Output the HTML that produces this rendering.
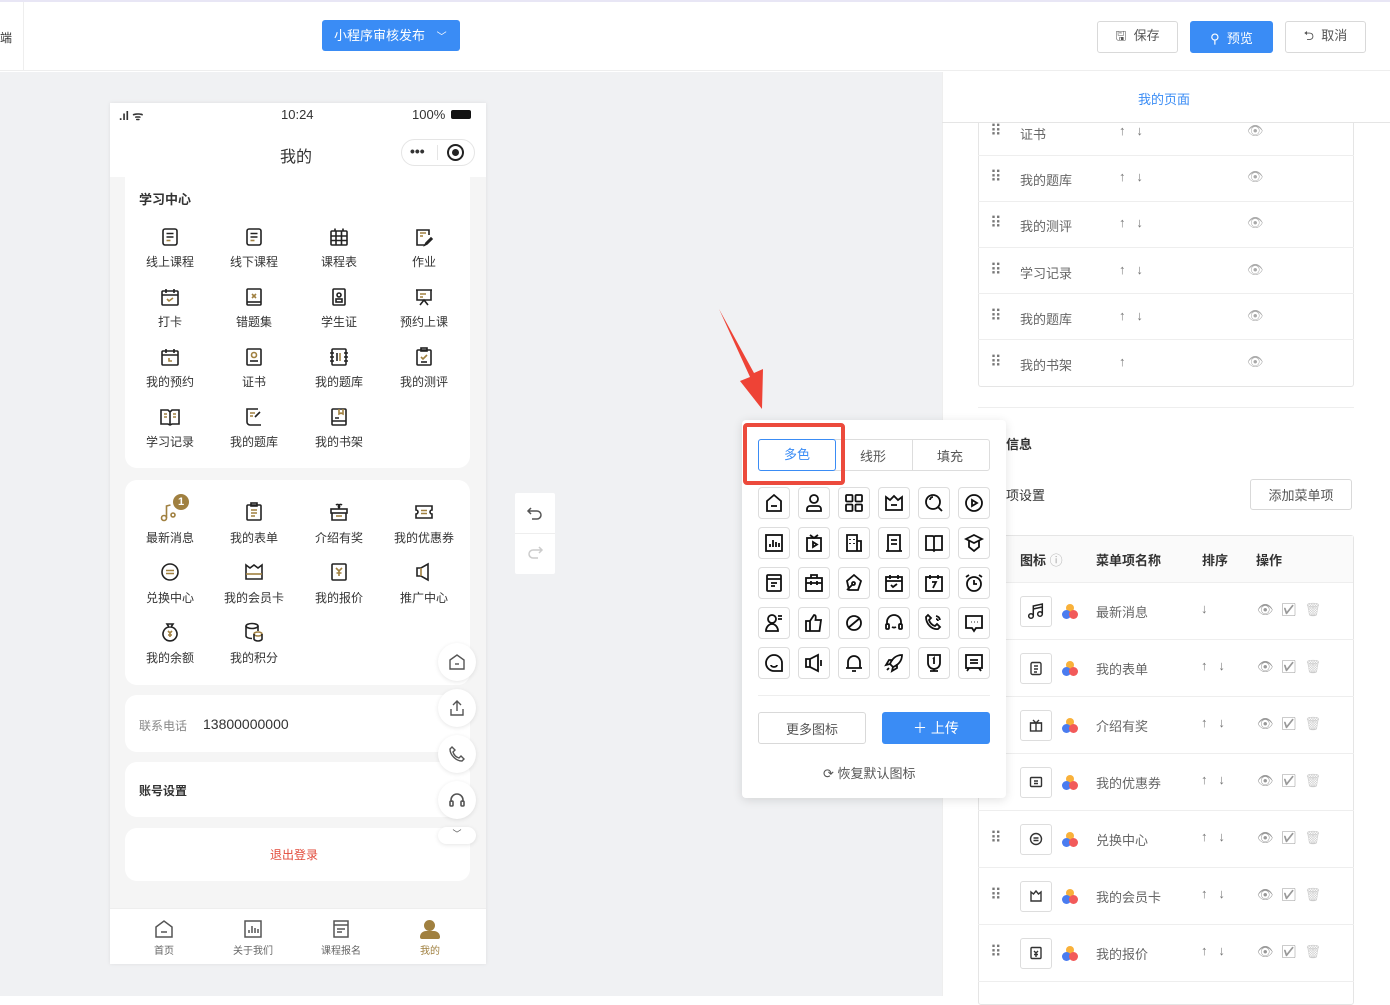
<!DOCTYPE html>
<html><head><meta charset="utf-8"><style>
*{box-sizing:border-box;margin:0;padding:0}
body{width:1390px;height:996px;position:relative;overflow:hidden;background:#fff;font-family:"Liberation Sans","Noto Sans CJK SC",sans-serif;font-size:13px;color:#333}
.a{position:absolute}
.t{position:absolute;white-space:nowrap}
.btn{position:absolute;border:1px solid #d9d9d9;border-radius:3px;background:#fff;color:#555;font-size:13px;display:flex;align-items:center;justify-content:center}
.ic{position:absolute;width:20px;height:20px}
.lb{position:absolute;width:84px;text-align:center;font-size:12px;color:#333}
.pc{position:absolute;width:32px;height:32px;border:1px solid #ddd;border-radius:4px;background:#fff}
.pc svg{position:absolute;left:5px;top:5px}
.row{position:absolute;left:978px;width:376px;border-bottom:1px solid #eee}
.gray{color:#777}
.ar{position:absolute;white-space:nowrap;color:#777;font-weight:bold}
</style></head><body>
<!-- top bar -->
<div class="a" style="left:0;top:0;width:1390px;height:2px;background:#e8e6f5"></div>
<div class="a" style="left:0;top:2px;width:1390px;height:69px;background:#fff;border-bottom:1px solid #eee"></div>
<div class="a" style="left:23px;top:2px;width:1px;height:69px;background:#eee"></div>
<div class="t" style="left:0;top:29px;font-size:12px">端</div>
<div class="a" style="left:322px;top:20px;width:138px;height:31px;background:#3a8cf5;border-radius:3px;color:#fff;font-size:13px;line-height:31px;padding-left:12px">小程序审核发布 <span style="margin-left:8px;font-size:10px">﹀</span></div>
<div class="btn" style="left:1097px;top:21px;width:81px;height:32px">🖫&nbsp; 保存</div>
<div class="btn" style="left:1190px;top:21px;width:83px;height:32px;background:#3a8cf5;border-color:#3a8cf5;color:#fff">⚲&nbsp; 预览</div>
<div class="btn" style="left:1285px;top:21px;width:81px;height:32px">⮌&nbsp; 取消</div>

<!-- gray canvas -->
<div class="a" style="left:0;top:72px;width:942px;height:924px;background:#f0f1f3"></div>
<!-- right panel -->
<div class="a" style="left:942px;top:72px;width:448px;height:924px;background:#fff;border-left:1px solid #eee"></div>
<div class="a" style="left:978px;top:122px;width:376px;height:265px;border:1px solid #e5e5e5;border-top:none;border-radius:0 0 3px 3px"></div>
<div class="t" style="left:1138px;top:89px;color:#3a8cf5;font-size:13px">我的页面</div>
<div class="a" style="left:942px;top:122px;width:448px;height:1px;background:#e5e5e5"></div>

<div class="row" style="top:110px;height:46px"></div>
<div class="row" style="top:156px;height:46px"></div>
<div class="row" style="top:202px;height:46px"></div>
<div class="row" style="top:248px;height:46px"></div>
<div class="row" style="top:294px;height:46px"></div>
<div class="a" style="left:942px;top:122px;width:448px;height:1px;background:#e5e5e5"></div>

<div class="t gray" style="left:990px;top:121px;font-size:16px">⠿</div><div class="t" style="left:1020px;top:124px;color:#666">证书</div><div class="ar" style="left:1119px;top:123px">↑&nbsp;&nbsp; ↓</div><div class="t" style="left:1247px;top:123px;color:#aaa">👁</div>
<div class="t gray" style="left:990px;top:167px;font-size:16px">⠿</div><div class="t" style="left:1020px;top:170px;color:#666">我的题库</div><div class="ar" style="left:1119px;top:169px">↑&nbsp;&nbsp; ↓</div><div class="t" style="left:1247px;top:169px;color:#aaa">👁</div>
<div class="t gray" style="left:990px;top:213px;font-size:16px">⠿</div><div class="t" style="left:1020px;top:216px;color:#666">我的测评</div><div class="ar" style="left:1119px;top:215px">↑&nbsp;&nbsp; ↓</div><div class="t" style="left:1247px;top:215px;color:#aaa">👁</div>
<div class="t gray" style="left:990px;top:260px;font-size:16px">⠿</div><div class="t" style="left:1020px;top:263px;color:#666">学习记录</div><div class="ar" style="left:1119px;top:262px">↑&nbsp;&nbsp; ↓</div><div class="t" style="left:1247px;top:262px;color:#aaa">👁</div>
<div class="t gray" style="left:990px;top:306px;font-size:16px">⠿</div><div class="t" style="left:1020px;top:309px;color:#666">我的题库</div><div class="ar" style="left:1119px;top:308px">↑&nbsp;&nbsp; ↓</div><div class="t" style="left:1247px;top:308px;color:#aaa">👁</div>
<div class="t gray" style="left:990px;top:352px;font-size:16px">⠿</div><div class="t" style="left:1020px;top:355px;color:#666">我的书架</div><div class="ar" style="left:1119px;top:354px">↑</div><div class="t" style="left:1247px;top:354px;color:#aaa">👁</div>

<div class="a" style="left:978px;top:407px;width:376px;height:1px;background:#eee"></div>
<div class="t" style="left:993px;top:434px;font-size:13px;font-weight:bold;color:#333">单信息</div>
<div class="t" style="left:980px;top:485px;font-size:13px;color:#333">菜单项设置</div>
<div class="btn" style="left:1250px;top:479px;width:102px;height:31px">添加菜单项</div>

<div class="a" style="left:978px;top:535px;width:376px;height:470px;border:1px solid #e5e5e5;border-radius:3px"></div>
<div class="a" style="left:979px;top:536px;width:374px;height:47px;background:#fafafa;border-bottom:1px solid #eee"></div>
<div class="t" style="left:1020px;top:550px;font-weight:bold;font-size:13px">图标 <span style="color:#aaa;font-weight:normal">ⓘ</span></div>
<div class="t" style="left:1096px;top:550px;font-weight:bold">菜单项名称</div>
<div class="t" style="left:1202px;top:550px;font-weight:bold">排序</div>
<div class="t" style="left:1256px;top:550px;font-weight:bold">操作</div>

<!-- table rows -->
<div class="row" style="top:583px;height:57px"></div>
<div class="row" style="top:640px;height:57px"></div>
<div class="row" style="top:697px;height:57px"></div>
<div class="row" style="top:754px;height:57px"></div>
<div class="row" style="top:811px;height:57px"></div>
<div class="row" style="top:868px;height:57px"></div>
<div class="row" style="top:925px;height:57px"></div>

<!-- row contents -->
<div class="a" style="left:1020px;top:596px;width:32px;height:31px;border:1px solid #ddd;border-radius:3px"></div>
<svg class="a" style="left:1026px;top:601px" width="20" height="20" viewBox="0 0 20 20" fill="none" stroke="#222" stroke-width="1.5"><circle cx="5" cy="15" r="2.3"/><circle cx="14" cy="13" r="2.3"/><path d="M7.3 15V5l9-2v10M7.3 8l9-2"/></svg>
<div class="a" style="left:1020px;top:653px;width:32px;height:31px;border:1px solid #ddd;border-radius:3px"></div>
<div class="a" style="left:1020px;top:710px;width:32px;height:31px;border:1px solid #ddd;border-radius:3px"></div>
<div class="a" style="left:1020px;top:767px;width:32px;height:31px;border:1px solid #ddd;border-radius:3px"></div>
<div class="a" style="left:1020px;top:824px;width:32px;height:31px;border:1px solid #ddd;border-radius:3px"></div>
<div class="a" style="left:1020px;top:881px;width:32px;height:31px;border:1px solid #ddd;border-radius:3px"></div>
<div class="a" style="left:1020px;top:938px;width:32px;height:31px;border:1px solid #ddd;border-radius:3px"></div>
<svg class="a" style="left:1028px;top:660px" width="16" height="16" viewBox="0 0 16 16" fill="none" stroke="#333" stroke-width="1.4"><rect x="3" y="2.5" width="10" height="12" rx="1.5"/><path d="M6 6h4M6 9h4M6 12h3"/></svg>
<svg class="a" style="left:1028px;top:717px" width="16" height="16" viewBox="0 0 16 16" fill="none" stroke="#333" stroke-width="1.4"><rect x="2.5" y="6" width="11" height="8"/><path d="M2 6h12M8 6v8M5 3l3 3 3-3"/></svg>
<svg class="a" style="left:1028px;top:774px" width="16" height="16" viewBox="0 0 16 16" fill="none" stroke="#333" stroke-width="1.4"><rect x="2.5" y="3.5" width="11" height="9" rx="1"/><path d="M6 7h4M6 9.5h4"/></svg>
<svg class="a" style="left:1028px;top:831px" width="16" height="16" viewBox="0 0 16 16" fill="none" stroke="#333" stroke-width="1.4"><circle cx="8" cy="8" r="5.5"/><path d="M5.5 7h5M5.5 9.5h5"/></svg>
<svg class="a" style="left:1028px;top:888px" width="16" height="16" viewBox="0 0 16 16" fill="none" stroke="#333" stroke-width="1.4"><path d="M3 4l2.5 2L8 3l2.5 3L13 4v9H3z"/></svg>
<svg class="a" style="left:1028px;top:945px" width="16" height="16" viewBox="0 0 16 16" fill="none" stroke="#333" stroke-width="1.4"><rect x="3" y="2.5" width="10" height="11" rx="1"/><path d="M6 6l2 2 2-2M8 8v4M6 9.5h4"/></svg>

<!-- color dots -->
<div class="a" style="left:1062px;top:604px;width:16px;height:16px"><div class="a" style="left:4px;top:0;width:8px;height:8px;border-radius:50%;background:#f9b13a"></div><div class="a" style="left:0;top:6px;width:9px;height:9px;border-radius:50%;background:#4a7cf0"></div><div class="a" style="left:7px;top:6px;width:9px;height:9px;border-radius:50%;background:#f25a5a"></div></div>
<div class="a" style="left:1062px;top:661px;width:16px;height:16px"><div class="a" style="left:4px;top:0;width:8px;height:8px;border-radius:50%;background:#f9b13a"></div><div class="a" style="left:0;top:6px;width:9px;height:9px;border-radius:50%;background:#4a7cf0"></div><div class="a" style="left:7px;top:6px;width:9px;height:9px;border-radius:50%;background:#f25a5a"></div></div>
<div class="a" style="left:1062px;top:718px;width:16px;height:16px"><div class="a" style="left:4px;top:0;width:8px;height:8px;border-radius:50%;background:#f9b13a"></div><div class="a" style="left:0;top:6px;width:9px;height:9px;border-radius:50%;background:#4a7cf0"></div><div class="a" style="left:7px;top:6px;width:9px;height:9px;border-radius:50%;background:#f25a5a"></div></div>
<div class="a" style="left:1062px;top:775px;width:16px;height:16px"><div class="a" style="left:4px;top:0;width:8px;height:8px;border-radius:50%;background:#f9b13a"></div><div class="a" style="left:0;top:6px;width:9px;height:9px;border-radius:50%;background:#4a7cf0"></div><div class="a" style="left:7px;top:6px;width:9px;height:9px;border-radius:50%;background:#f25a5a"></div></div>
<div class="a" style="left:1062px;top:832px;width:16px;height:16px"><div class="a" style="left:4px;top:0;width:8px;height:8px;border-radius:50%;background:#f9b13a"></div><div class="a" style="left:0;top:6px;width:9px;height:9px;border-radius:50%;background:#4a7cf0"></div><div class="a" style="left:7px;top:6px;width:9px;height:9px;border-radius:50%;background:#f25a5a"></div></div>
<div class="a" style="left:1062px;top:889px;width:16px;height:16px"><div class="a" style="left:4px;top:0;width:8px;height:8px;border-radius:50%;background:#f9b13a"></div><div class="a" style="left:0;top:6px;width:9px;height:9px;border-radius:50%;background:#4a7cf0"></div><div class="a" style="left:7px;top:6px;width:9px;height:9px;border-radius:50%;background:#f25a5a"></div></div>
<div class="a" style="left:1062px;top:946px;width:16px;height:16px"><div class="a" style="left:4px;top:0;width:8px;height:8px;border-radius:50%;background:#f9b13a"></div><div class="a" style="left:0;top:6px;width:9px;height:9px;border-radius:50%;background:#4a7cf0"></div><div class="a" style="left:7px;top:6px;width:9px;height:9px;border-radius:50%;background:#f25a5a"></div></div>

<div class="t" style="left:1096px;top:602px;color:#666">最新消息</div><div class="ar" style="left:1201px;top:601px">↓</div>
<div class="t" style="left:1096px;top:659px;color:#666">我的表单</div><div class="ar" style="left:1201px;top:658px">↑&nbsp;&nbsp; ↓</div>
<div class="t" style="left:1096px;top:716px;color:#666">介绍有奖</div><div class="ar" style="left:1201px;top:715px">↑&nbsp;&nbsp; ↓</div>
<div class="t" style="left:1096px;top:773px;color:#666">我的优惠券</div><div class="ar" style="left:1201px;top:772px">↑&nbsp;&nbsp; ↓</div>
<div class="t" style="left:1096px;top:830px;color:#666">兑换中心</div><div class="ar" style="left:1201px;top:829px">↑&nbsp;&nbsp; ↓</div>
<div class="t" style="left:1096px;top:887px;color:#666">我的会员卡</div><div class="ar" style="left:1201px;top:886px">↑&nbsp;&nbsp; ↓</div>
<div class="t" style="left:1096px;top:944px;color:#666">我的报价</div><div class="ar" style="left:1201px;top:943px">↑&nbsp;&nbsp; ↓</div>

<div class="t" style="left:1257px;top:602px;color:#999;font-size:13px">👁&nbsp; ☑&nbsp; <span style="color:#ccc">🗑</span></div>
<div class="t" style="left:1257px;top:659px;color:#999;font-size:13px">👁&nbsp; ☑&nbsp; <span style="color:#ccc">🗑</span></div>
<div class="t" style="left:1257px;top:716px;color:#999;font-size:13px">👁&nbsp; ☑&nbsp; <span style="color:#ccc">🗑</span></div>
<div class="t" style="left:1257px;top:773px;color:#999;font-size:13px">👁&nbsp; ☑&nbsp; <span style="color:#ccc">🗑</span></div>
<div class="t" style="left:1257px;top:830px;color:#999;font-size:13px">👁&nbsp; ☑&nbsp; <span style="color:#ccc">🗑</span></div>
<div class="t" style="left:1257px;top:887px;color:#999;font-size:13px">👁&nbsp; ☑&nbsp; <span style="color:#ccc">🗑</span></div>
<div class="t" style="left:1257px;top:944px;color:#999;font-size:13px">👁&nbsp; ☑&nbsp; <span style="color:#ccc">🗑</span></div>
<div class="t gray" style="left:990px;top:828px;font-size:16px">⠿</div>
<div class="t gray" style="left:990px;top:885px;font-size:16px">⠿</div>
<div class="t gray" style="left:990px;top:942px;font-size:16px">⠿</div>

<!-- phone -->
<div class="a" style="left:110px;top:103px;width:376px;height:861px;background:#f5f5f5;box-shadow:0 0 4px rgba(0,0,0,.08)"></div>
<div class="a" style="left:110px;top:103px;width:376px;height:74px;background:#fff"></div>
<div class="t" style="left:119px;top:107px;font-size:12px;font-weight:bold">.ıl ᯤ</div>
<div class="t" style="left:281px;top:107px;font-size:13px">10:24</div>
<div class="t" style="left:412px;top:107px;font-size:13px">100%</div>
<div class="a" style="left:451px;top:110px;width:20px;height:9px;background:#111;border-radius:2px"></div>
<div class="t" style="left:280px;top:143px;font-size:16px">我的</div>
<div class="a" style="left:401px;top:139px;width:74px;height:27px;border:1px solid #e5e5e5;border-radius:14px;background:#fff"></div>
<div class="t" style="left:410px;top:143px;font-size:14px;font-weight:bold">•••</div>
<div class="a" style="left:437px;top:145px;width:1px;height:15px;background:#e5e5e5"></div>
<div class="a" style="left:447px;top:144px;width:17px;height:17px;border:2px solid #222;border-radius:50%"></div>
<div class="a" style="left:452px;top:149px;width:7px;height:7px;background:#222;border-radius:50%"></div>

<div class="a" style="left:125px;top:177px;width:345px;height:291px;background:#fff;border-radius:0 0 12px 12px"></div>
<div class="t" style="left:139px;top:189px;font-size:13px;font-weight:bold">学习中心</div>
<div class="a" style="left:125px;top:480px;width:345px;height:205px;background:#fff;border-radius:12px"></div>
<div class="a" style="left:125px;top:695px;width:345px;height:57px;background:#fff;border-radius:12px"></div>
<div class="t" style="left:139px;top:717px;font-size:12px;color:#888">联系电话</div>
<div class="t" style="left:203px;top:716px;font-size:14px;color:#333">13800000000</div>
<div class="a" style="left:125px;top:762px;width:345px;height:55px;background:#fff;border-radius:12px"></div>
<div class="t" style="left:139px;top:782px;font-size:12px;font-weight:bold">账号设置</div>
<div class="a" style="left:125px;top:828px;width:345px;height:53px;background:#fff;border-radius:12px"></div>
<div class="t" style="left:270px;top:846px;font-size:12px;color:#e24a3a">退出登录</div>

<svg width="0" height="0" style="position:absolute"><defs>
<g id="gi" fill="none" stroke="#222" stroke-width="1.6"><rect x="3" y="2" width="14" height="16" rx="2"/><path d="M6.5 6.5h7M6.5 10h7" /><path d="M6.5 13.5h4" stroke="#a08040"/></g>
</defs></svg>
<svg class="ic" style="left:160px;top:227px"><use href="#gi"/></svg><div class="lb" style="left:128px;top:253px">线上课程</div>
<svg class="ic" style="left:244px;top:227px"><use href="#gi"/></svg><div class="lb" style="left:212px;top:253px">线下课程</div>
<svg class="ic" style="left:329px;top:227px" viewBox="0 0 20 20" fill="none" stroke="#222" stroke-width="1.6"><rect x="2" y="4" width="16" height="14" rx="1"/><path d="M2 9h16M2 13.5h16M7 4v14M12.5 4v14M6 1.5v3M14 1.5v3"/></svg><div class="lb" style="left:297px;top:253px">课程表</div>
<svg class="ic" style="left:414px;top:227px" viewBox="0 0 20 20" fill="none" stroke="#222" stroke-width="1.6"><path d="M15 8V3H3v15h8"/><path d="M6 6h6M6 9h3" stroke="#a08040"/><path d="M17 11l-5 5-1 2 2-1 5-5z"/></svg><div class="lb" style="left:382px;top:253px">作业</div>

<svg class="ic" style="left:160px;top:287px" viewBox="0 0 20 20" fill="none" stroke="#222" stroke-width="1.6"><rect x="2" y="4" width="16" height="14" rx="1"/><path d="M2 8h16M6 2v4M14 2v4"/><path d="M7 12l2 2 4-3" stroke="#a08040"/></svg><div class="lb" style="left:128px;top:313px">打卡</div>
<svg class="ic" style="left:244px;top:287px" viewBox="0 0 20 20" fill="none" stroke="#222" stroke-width="1.6"><rect x="3" y="2" width="14" height="16" rx="1"/><path d="M8 7l4 4M12 7l-4 4" stroke="#a08040"/><path d="M3 15h14"/></svg><div class="lb" style="left:212px;top:313px">错题集</div>
<svg class="ic" style="left:329px;top:287px" viewBox="0 0 20 20" fill="none" stroke="#222" stroke-width="1.6"><rect x="4" y="2" width="12" height="16" rx="1"/><circle cx="10" cy="8" r="2"/><rect x="7" y="12" width="6" height="3"/></svg><div class="lb" style="left:297px;top:313px">学生证</div>
<svg class="ic" style="left:414px;top:287px" viewBox="0 0 20 20" fill="none" stroke="#222" stroke-width="1.6"><path d="M2 3h16M3 3v10h14V3M6 18l4-5 4 5"/><path d="M6 7h6M6 10h3" stroke="#a08040"/></svg><div class="lb" style="left:382px;top:313px">预约上课</div>

<svg class="ic" style="left:160px;top:347px" viewBox="0 0 20 20" fill="none" stroke="#222" stroke-width="1.6"><rect x="2" y="4" width="16" height="14" rx="1"/><path d="M2 8h16M6 2v4M14 2v4"/><path d="M9 11v3h3" stroke="#a08040"/></svg><div class="lb" style="left:128px;top:373px">我的预约</div>
<svg class="ic" style="left:244px;top:347px" viewBox="0 0 20 20" fill="none" stroke="#222" stroke-width="1.6"><rect x="3" y="2" width="14" height="16" rx="1"/><circle cx="10" cy="8" r="2.5" stroke="#a08040"/><path d="M6 14h8"/></svg><div class="lb" style="left:212px;top:373px">证书</div>
<svg class="ic" style="left:329px;top:347px" viewBox="0 0 20 20" fill="none" stroke="#222" stroke-width="1.6"><rect x="3" y="2" width="14" height="16" rx="1"/><path d="M1 6h4M1 10h4M1 14h4M15 6h4M15 10h4M15 14h4M8 6v8" /><path d="M11 6v8" stroke="#a08040"/></svg><div class="lb" style="left:297px;top:373px">我的题库</div>
<svg class="ic" style="left:414px;top:347px" viewBox="0 0 20 20" fill="none" stroke="#222" stroke-width="1.6"><rect x="3" y="3" width="14" height="15" rx="1"/><rect x="7" y="1" width="6" height="3"/><path d="M7 10l2 2 4-4" stroke="#a08040"/><path d="M7 15h6"/></svg><div class="lb" style="left:382px;top:373px">我的测评</div>

<svg class="ic" style="left:160px;top:407px" viewBox="0 0 20 20" fill="none" stroke="#222" stroke-width="1.6"><path d="M1 3h7l2 2 2-2h7v14h-7l-2 1-2-1H1zM10 5v12"/><path d="M4 7h3M4 10h3M13 7h3M13 10h3" stroke="#a08040"/></svg><div class="lb" style="left:128px;top:433px">学习记录</div>
<svg class="ic" style="left:244px;top:407px" viewBox="0 0 20 20" fill="none" stroke="#222" stroke-width="1.6"><path d="M14 2H3v13a3 3 0 003 3h11"/><path d="M6 6h5M6 9h3" stroke="#a08040"/><path d="M16 5l-5 5"/></svg><div class="lb" style="left:212px;top:433px">我的题库</div>
<svg class="ic" style="left:329px;top:407px" viewBox="0 0 20 20" fill="none" stroke="#222" stroke-width="1.6"><rect x="3" y="2" width="14" height="16" rx="1"/><path d="M10 2v5l2-1 2 1V2" stroke="#a08040"/><path d="M6 11h4M3 14h14"/></svg><div class="lb" style="left:297px;top:433px">我的书架</div>

<!-- card2 -->
<svg class="ic" style="left:160px;top:502px" viewBox="0 0 20 20" fill="none" stroke="#a08040" stroke-width="1.6"><circle cx="4" cy="16" r="2.5"/><path d="M6.5 16V4l4-1"/><circle cx="13" cy="13" r="2"/></svg>
<div class="a" style="left:173px;top:494px;width:16px;height:16px;border-radius:50%;background:#a08040;color:#fff;font-size:11px;font-weight:bold;text-align:center;line-height:16px">1</div>
<div class="lb" style="left:128px;top:529px">最新消息</div>
<svg class="ic" style="left:244px;top:502px" viewBox="0 0 20 20" fill="none" stroke="#222" stroke-width="1.6"><rect x="3" y="3" width="14" height="15" rx="1"/><rect x="7" y="1" width="6" height="3"/><path d="M7 8h6M7 11h6M7 14h4" stroke="#a08040"/></svg><div class="lb" style="left:212px;top:529px">我的表单</div>
<svg class="ic" style="left:329px;top:502px" viewBox="0 0 20 20" fill="none" stroke="#222" stroke-width="1.6"><rect x="2" y="7" width="16" height="4"/><path d="M3 11v7h14v-7M7 3a2 2 0 013 3 2 2 0 013-3"/><path d="M7 14h6" stroke="#a08040"/></svg><div class="lb" style="left:297px;top:529px">介绍有奖</div>
<svg class="ic" style="left:414px;top:502px" viewBox="0 0 20 20" fill="none" stroke="#222" stroke-width="1.6"><path d="M2 4h16v4a2 2 0 000 4v4H2v-4a2 2 0 000-4z"/><path d="M7 8.5h6M7 11.5h6" stroke="#a08040"/></svg><div class="lb" style="left:382px;top:529px">我的优惠券</div>

<svg class="ic" style="left:160px;top:562px" viewBox="0 0 20 20" fill="none" stroke="#222" stroke-width="1.6"><circle cx="10" cy="10" r="8"/><path d="M6 8.5h8M6 11.5h8" stroke="#a08040"/></svg><div class="lb" style="left:128px;top:589px">兑换中心</div>
<svg class="ic" style="left:244px;top:562px" viewBox="0 0 20 20" fill="none" stroke="#222" stroke-width="1.6"><path d="M2 3l4 3 4-3 4 3 4-3v14H2z"/><path d="M2 12h16" stroke="#a08040"/></svg><div class="lb" style="left:212px;top:589px">我的会员卡</div>
<svg class="ic" style="left:329px;top:562px" viewBox="0 0 20 20" fill="none" stroke="#222" stroke-width="1.6"><rect x="3" y="2" width="14" height="16" rx="1"/><path d="M7 6l3 3 3-3M10 9v5M7.5 11h5" stroke="#a08040"/></svg><div class="lb" style="left:297px;top:589px">我的报价</div>
<svg class="ic" style="left:414px;top:562px" viewBox="0 0 20 20" fill="none" stroke="#222" stroke-width="1.6"><path d="M3 6h4l7-4v16l-7-4H3z"/><path d="M7 6v8" stroke="#a08040"/></svg><div class="lb" style="left:382px;top:589px">推广中心</div>

<svg class="ic" style="left:160px;top:622px" viewBox="0 0 20 20" fill="none" stroke="#222" stroke-width="1.6"><path d="M7 2h6l-2 3a7 7 0 11-2 0z"/><path d="M8 9l2 2 2-2M10 11v4M8 13h4" stroke="#a08040"/></svg><div class="lb" style="left:128px;top:649px">我的余额</div>
<svg class="ic" style="left:244px;top:622px" viewBox="0 0 20 20" fill="none" stroke="#222" stroke-width="1.6"><ellipse cx="8" cy="4" rx="6" ry="2.5"/><path d="M2 4v10c0 1.5 3 2.5 6 2.5M14 4v5"/><ellipse cx="14" cy="12" rx="4" ry="2" stroke="#a08040"/><path d="M10 12v5c0 1 2 2 4 2s4-1 4-2v-5"/></svg><div class="lb" style="left:212px;top:649px">我的积分</div>

<!-- tab bar -->
<div class="a" style="left:110px;top:908px;width:376px;height:56px;background:#fff;border-top:1px solid #eee"></div>
<svg class="a" style="left:154px;top:919px" width="20" height="20" viewBox="0 0 20 20" fill="none" stroke="#555" stroke-width="1.5"><path d="M2 8l8-6 8 6v10H2z"/><path d="M7 13h6"/></svg><div class="t" style="left:154px;top:942px;font-size:10px;color:#666">首页</div>
<svg class="a" style="left:243px;top:919px" width="20" height="20" viewBox="0 0 20 20" fill="none" stroke="#555" stroke-width="1.5"><rect x="2" y="2" width="16" height="16"/><path d="M6 14v-3M9 14V7M12 14V9M15 14v-4"/></svg><div class="t" style="left:233px;top:942px;font-size:10px;color:#666">关于我们</div>
<svg class="a" style="left:331px;top:919px" width="20" height="20" viewBox="0 0 20 20" fill="none" stroke="#555" stroke-width="1.5"><rect x="3" y="2" width="14" height="16"/><path d="M3 6h14M6 10h8M6 13h5"/></svg><div class="t" style="left:321px;top:942px;font-size:10px;color:#666">课程报名</div>
<div class="a" style="left:424px;top:920px;width:11px;height:11px;border-radius:50%;background:#a08040"></div>
<div class="a" style="left:420px;top:931px;width:20px;height:8px;border-radius:6px 6px 2px 2px;background:#a08040"></div>
<div class="t" style="left:420px;top:942px;font-size:10px;color:#a08040">我的</div>

<!-- floating buttons -->
<div class="a" style="left:438px;top:643px;width:38px;height:38px;border-radius:50%;background:#fff;box-shadow:0 1px 4px rgba(0,0,0,.1)"></div>
<svg class="a" style="left:448px;top:653px" width="18" height="18" viewBox="0 0 18 18" fill="none" stroke="#555" stroke-width="1.4"><path d="M2 7l7-5 7 5v9H2z"/><path d="M7 11h4"/></svg>
<div class="a" style="left:438px;top:689px;width:38px;height:38px;border-radius:50%;background:#fff;box-shadow:0 1px 4px rgba(0,0,0,.1)"></div>
<svg class="a" style="left:448px;top:699px" width="18" height="18" viewBox="0 0 18 18" fill="none" stroke="#555" stroke-width="1.4"><path d="M3 10v6h12v-6M9 12V2M5 6l4-4 4 4"/></svg>
<div class="a" style="left:438px;top:735px;width:38px;height:38px;border-radius:50%;background:#fff;box-shadow:0 1px 4px rgba(0,0,0,.1)"></div>
<svg class="a" style="left:448px;top:745px" width="18" height="18" viewBox="0 0 18 18" fill="none" stroke="#555" stroke-width="1.4"><path d="M4 2l3 3-2 2a9 9 0 006 6l2-2 3 3-2 2C8 16 2 10 2 4z"/></svg>
<div class="a" style="left:438px;top:781px;width:38px;height:38px;border-radius:50%;background:#fff;box-shadow:0 1px 4px rgba(0,0,0,.1)"></div>
<svg class="a" style="left:448px;top:791px" width="18" height="18" viewBox="0 0 18 18" fill="none" stroke="#555" stroke-width="1.6"><path d="M3 11V9a6 6 0 0112 0v2"/><rect x="2" y="10" width="3" height="5" rx="1"/><rect x="13" y="10" width="3" height="5" rx="1"/></svg>
<div class="a" style="left:438px;top:827px;width:38px;height:17px;border-radius:9px;background:#fff;box-shadow:0 1px 4px rgba(0,0,0,.1);text-align:center;font-size:9px;line-height:15px;color:#555">﹀</div>

<!-- undo/redo -->
<div class="a" style="left:515px;top:493px;width:40px;height:81px;background:#fff;border-radius:2px"></div>
<div class="a" style="left:515px;top:533px;width:40px;height:1px;background:#eee"></div>
<svg class="a" style="left:526px;top:505px" width="18" height="18" viewBox="0 0 18 18" fill="none" stroke="#555" stroke-width="1.5"><path d="M5 3L2 6l3 3M2 6h9a4 4 0 010 8H6"/></svg>
<svg class="a" style="left:526px;top:544px" width="18" height="18" viewBox="0 0 18 18" fill="none" stroke="#ccc" stroke-width="1.5"><path d="M13 3l3 3-3 3M16 6H7a4 4 0 000 8h5"/></svg>

<!-- red arrow -->
<svg class="a" style="left:710px;top:305px" width="60" height="110" viewBox="0 0 60 110"><path d="M9 4L40 72 30 76 52 104 53 64 44 68z" fill="#ee4336"/></svg>

<!-- popup -->
<div class="a" style="left:742px;top:420px;width:264px;height:378px;background:#fff;border-radius:4px;box-shadow:0 2px 10px rgba(0,0,0,.12)"></div>
<div class="a" style="left:758px;top:439px;width:232px;height:32px;border:1px solid #ddd;border-radius:3px"></div>
<div class="a" style="left:912px;top:440px;width:1px;height:30px;background:#ddd"></div>
<div class="a" style="left:758px;top:439px;width:78px;height:32px;border:1px solid #3a8cf5;border-radius:3px;color:#3a8cf5;text-align:center;line-height:30px">多色</div>
<div class="t" style="left:860px;top:446px;color:#555">线形</div>
<div class="t" style="left:937px;top:446px;color:#555">填充</div>
<div class="a" style="left:743px;top:423px;width:102px;height:62px;border:4px solid #ec4a3c;border-radius:4px"></div>

<!-- picker cells -->
<div class="pc" style="left:758px;top:487px"><svg width="20" height="20" viewBox="0 0 20 20" fill="none" stroke="#111" stroke-width="1.8"><path d="M3 8l7-6 7 6v10H3z"/><path d="M7 13h6"/></svg></div>
<div class="pc" style="left:798px;top:487px"><svg width="20" height="20" viewBox="0 0 20 20" fill="none" stroke="#111" stroke-width="1.8"><circle cx="10" cy="6" r="4"/><path d="M3 18v-2a3 3 0 013-3h8a3 3 0 013 3v2z"/></svg></div>
<div class="pc" style="left:838px;top:487px"><svg width="20" height="20" viewBox="0 0 20 20" fill="none" stroke="#111" stroke-width="1.8"><rect x="2" y="2" width="6.5" height="6.5" rx="1"/><rect x="11.5" y="2" width="6.5" height="6.5" rx="1"/><rect x="2" y="11.5" width="6.5" height="6.5" rx="1"/><rect x="11.5" y="11.5" width="6.5" height="6.5" rx="1"/></svg></div>
<div class="pc" style="left:878px;top:487px"><svg width="20" height="20" viewBox="0 0 20 20" fill="none" stroke="#111" stroke-width="1.8"><path d="M2 4l4 3 4-4 4 4 4-3v13H2z"/><path d="M7 12h6"/></svg></div>
<div class="pc" style="left:918px;top:487px"><svg width="20" height="20" viewBox="0 0 20 20" fill="none" stroke="#111" stroke-width="1.8"><circle cx="9" cy="9" r="7"/><path d="M14 14l4 4M6 7a3 3 0 013-3"/></svg></div>
<div class="pc" style="left:958px;top:487px"><svg width="20" height="20" viewBox="0 0 20 20" fill="none" stroke="#111" stroke-width="1.8"><circle cx="10" cy="10" r="8"/><path d="M8 7v6l5-3z"/></svg></div>

<div class="pc" style="left:758px;top:527px"><svg width="20" height="20" viewBox="0 0 20 20" fill="none" stroke="#111" stroke-width="1.8"><rect x="2" y="2" width="16" height="16"/><path d="M6 14v-3M9 14V7M12 14V9M15 14v-4"/></svg></div>
<div class="pc" style="left:798px;top:527px"><svg width="20" height="20" viewBox="0 0 20 20" fill="none" stroke="#111" stroke-width="1.8"><rect x="3" y="5" width="14" height="13"/><path d="M6 2l4 3 4-3M9 9v5l4-2.5z"/></svg></div>
<div class="pc" style="left:838px;top:527px"><svg width="20" height="20" viewBox="0 0 20 20" fill="none" stroke="#111" stroke-width="1.8"><path d="M3 18V2h10v16M13 8h4v10M2 18h16M6 6v1M10 6v1M6 10v1M10 10v1"/></svg></div>
<div class="pc" style="left:878px;top:527px"><svg width="20" height="20" viewBox="0 0 20 20" fill="none" stroke="#111" stroke-width="1.8"><path d="M4 2h12v16H4zM7 7h6M7 11h6M2 18h16"/></svg></div>
<div class="pc" style="left:918px;top:527px"><svg width="20" height="20" viewBox="0 0 20 20" fill="none" stroke="#111" stroke-width="1.8"><path d="M2 3h7l1 1 1-1h7v14h-7l-1 1-1-1H2zM10 4v14"/></svg></div>
<div class="pc" style="left:958px;top:527px"><svg width="20" height="20" viewBox="0 0 20 20" fill="none" stroke="#111" stroke-width="1.8"><path d="M10 2l8 4-8 4-8-4zM5 8v6l5 4 5-4V8"/></svg></div>

<div class="pc" style="left:758px;top:567px"><svg width="20" height="20" viewBox="0 0 20 20" fill="none" stroke="#111" stroke-width="1.8"><rect x="3" y="2" width="14" height="16" rx="1"/><path d="M3 6h14M7 10h6M7 13h4"/></svg></div>
<div class="pc" style="left:798px;top:567px"><svg width="20" height="20" viewBox="0 0 20 20" fill="none" stroke="#111" stroke-width="1.8"><rect x="2" y="5" width="16" height="13"/><path d="M7 5V2h6v3M2 10h16M7 8v4M13 8v4"/></svg></div>
<div class="pc" style="left:838px;top:567px"><svg width="20" height="20" viewBox="0 0 20 20" fill="none" stroke="#111" stroke-width="1.8"><path d="M10 2l7 6-3 9H5L3 8zM3 17l5-5"/><circle cx="9.5" cy="10.5" r="1.5"/></svg></div>
<div class="pc" style="left:878px;top:567px"><svg width="20" height="20" viewBox="0 0 20 20" fill="none" stroke="#111" stroke-width="1.8"><rect x="2" y="4" width="16" height="14"/><path d="M2 8h16M6 2v4M14 2v4M7 12l2 2 4-3"/></svg></div>
<div class="pc" style="left:918px;top:567px"><svg width="20" height="20" viewBox="0 0 20 20" fill="none" stroke="#111" stroke-width="1.8"><rect x="2" y="4" width="16" height="14"/><path d="M6 2v4M14 2v4M8 9h4l-3 6"/></svg></div>
<div class="pc" style="left:958px;top:567px"><svg width="20" height="20" viewBox="0 0 20 20" fill="none" stroke="#111" stroke-width="1.8"><circle cx="10" cy="11" r="7"/><path d="M10 7v4h3M2 4l3-2M18 4l-3-2"/></svg></div>

<div class="pc" style="left:758px;top:607px"><svg width="20" height="20" viewBox="0 0 20 20" fill="none" stroke="#111" stroke-width="1.8"><circle cx="8" cy="6" r="4"/><path d="M2 18c0-4 3-7 6-7s6 3 6 7zM14 3h4M14 6h4"/></svg></div>
<div class="pc" style="left:798px;top:607px"><svg width="20" height="20" viewBox="0 0 20 20" fill="none" stroke="#111" stroke-width="1.8"><path d="M2 8h4v10H2zM6 8l4-6c2 0 2 2 1.5 5H17l-1.5 11H6"/></svg></div>
<div class="pc" style="left:838px;top:607px"><svg width="20" height="20" viewBox="0 0 20 20" fill="none" stroke="#111" stroke-width="1.8"><circle cx="10" cy="10" r="7"/><path d="M4 15L16 5"/></svg></div>
<div class="pc" style="left:878px;top:607px"><svg width="20" height="20" viewBox="0 0 20 20" fill="none" stroke="#111" stroke-width="1.8"><path d="M3 12V9a7 7 0 0114 0v3"/><rect x="2" y="11" width="3" height="5" rx="1"/><rect x="15" y="11" width="3" height="5" rx="1"/><path d="M8 14a3 2 0 004 0"/></svg></div>
<div class="pc" style="left:918px;top:607px"><svg width="20" height="20" viewBox="0 0 20 20" fill="none" stroke="#111" stroke-width="1.8"><path d="M4 2l3 3-2 2a9 9 0 006 6l2-2 3 3-2 2C8 17 2 11 2 4zM12 3a5 5 0 014 4M12 6a2 2 0 012 2"/></svg></div>
<div class="pc" style="left:958px;top:607px"><svg width="20" height="20" viewBox="0 0 20 20" fill="none" stroke="#111" stroke-width="1.8"><path d="M2 3h16v12h-6l-2 3-2-3H2z"/><path d="M7 9h.5M10 9h.5M13 9h.5"/></svg></div>

<div class="pc" style="left:758px;top:647px"><svg width="20" height="20" viewBox="0 0 20 20" fill="none" stroke="#111" stroke-width="1.8"><path d="M10 18a8 8 0 118-8v8z"/><path d="M7 12a3 2 0 006 0"/></svg></div>
<div class="pc" style="left:798px;top:647px"><svg width="20" height="20" viewBox="0 0 20 20" fill="none" stroke="#111" stroke-width="1.8"><path d="M2 6h4l8-4v16l-8-4H2zM6 6v8M17 7v6"/></svg></div>
<div class="pc" style="left:838px;top:647px"><svg width="20" height="20" viewBox="0 0 20 20" fill="none" stroke="#111" stroke-width="1.8"><path d="M4 15V9a6 6 0 0112 0v6M2 15h16M8 18h4"/></svg></div>
<div class="pc" style="left:878px;top:647px"><svg width="20" height="20" viewBox="0 0 20 20" fill="none" stroke="#111" stroke-width="1.8"><path d="M18 2c-6 0-10 4-12 9l3 3c5-2 9-6 9-12zM6 11l-4 1 3-5h4M9 14l-1 4 5-3v-4M3 17l2-2"/></svg></div>
<div class="pc" style="left:918px;top:647px"><svg width="20" height="20" viewBox="0 0 20 20" fill="none" stroke="#111" stroke-width="1.8"><path d="M4 2h12v8a6 6 0 01-12 0zM10 16v2M6 18h8M9 6l1-1v6"/></svg></div>
<div class="pc" style="left:958px;top:647px"><svg width="20" height="20" viewBox="0 0 20 20" fill="none" stroke="#111" stroke-width="1.8"><rect x="2" y="2" width="16" height="13"/><path d="M6 7h8M6 10h8M5 15l-2 3M15 15l2 3"/></svg></div>

<div class="a" style="left:758px;top:695px;width:232px;height:1px;background:#eee"></div>
<div class="btn" style="left:758px;top:712px;width:108px;height:32px">更多图标</div>
<div class="a" style="left:882px;top:712px;width:108px;height:32px;background:#3a8cf5;border-radius:3px;color:#fff;text-align:center;line-height:32px;font-size:14px">＋ 上传</div>
<div class="t" style="left:823px;top:763px;color:#555">⟳ 恢复默认图标</div>
</body></html>
